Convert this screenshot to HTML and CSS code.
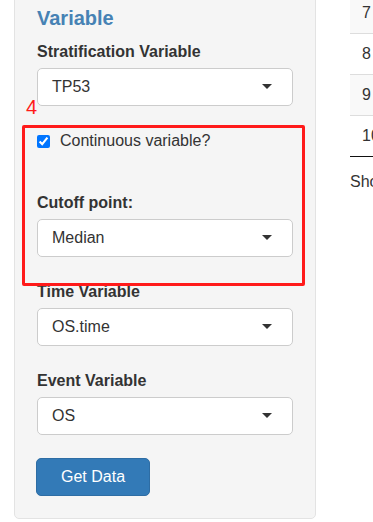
FILE: index.html
```html
<!DOCTYPE html>
<html lang="en">
<head>
    <meta charset="UTF-8">
    <meta name="viewport" content="width=device-width, initial-scale=1.0">
    <title>Survival analysis</title>
    <link rel="stylesheet" href="styles.css">
</head>
<body>
    <div class="page">
        <!-- sidebar panel -->
        <div class="well">
            <h3 class="panel-title">Variable</h3>

            <div class="form-group">
                <label class="control-label">Stratification Variable</label>
                <div class="select-box">
                    <span>TP53</span>
                    <span class="caret"></span>
                </div>
            </div>

            <!-- annotated block -->
            <div class="annot">
                <div class="form-group checkbox-group">
                    <label class="checkbox">
                        <input type="checkbox" checked>
                        <span>Continuous variable?</span>
                    </label>
                </div>

                <div class="form-group">
                    <label class="control-label">Cutoff point:</label>
                    <div class="select-box">
                        <span>Median</span>
                        <span class="caret"></span>
                    </div>
                </div>

                <div class="annot-box"></div>
                <div class="annot-num">4</div>
            </div>

            <div class="form-group">
                <label class="control-label">Time Variable</label>
                <div class="select-box">
                    <span>OS.time</span>
                    <span class="caret"></span>
                </div>
            </div>

            <div class="form-group last">
                <label class="control-label">Event Variable</label>
                <div class="select-box">
                    <span>OS</span>
                    <span class="caret"></span>
                </div>
            </div>

            <button class="btn-primary">Get Data</button>
        </div>

        <!-- data table -->
        <div class="main">
            <table class="data-table">
                <tr class="odd"><td>7</td></tr>
                <tr><td>8</td></tr>
                <tr class="odd"><td>9</td></tr>
                <tr><td>10</td></tr>
            </table>
            <div class="table-info">Showing 1 to 10 of 100 entries</div>
        </div>
    </div>
</body>
</html>
```

FILE: styles.css
```css
/* base */
html {
    overflow: hidden;
}

body {
    margin: 0;
    font-family: "Liberation Sans", Arial, sans-serif;
    font-size: 16px;
    line-height: 20px;
    color: #333;
    background-color: #fff;
}

.page {
    display: flex;
    align-items: flex-start;
    padding-left: 14px;
}

/* sidebar well */
.well {
    flex: 0 0 302px;
    box-sizing: border-box;
    margin-top: -16px;
    padding: 22px;
    background-color: #f5f5f5;
    border: 1px solid #e3e3e3;
    border-radius: 5px;
}

.panel-title {
    margin: 0 0 13px;
    font-size: 20px;
    line-height: 22px;
    font-weight: bold;
    color: #4682b4;
}

.form-group {
    margin-bottom: 25px;
}

.form-group.last {
    margin-bottom: 23px;
}

.control-label {
    display: block;
    margin-bottom: 6px;
    font-weight: bold;
}

/* fake selectize input */
.select-box {
    position: relative;
    box-sizing: border-box;
    height: 38px;
    padding: 8px 14px;
    background-color: #fff;
    border: 1px solid #ccc;
    border-radius: 5px;
}

.caret {
    position: absolute;
    right: 20px;
    top: 15px;
    width: 0;
    height: 0;
    border-left: 5.5px solid transparent;
    border-right: 5.5px solid transparent;
    border-top: 5px solid #333;
}

/* checkbox */
.checkbox-group {
    margin-bottom: 42px;
}

.checkbox {
    display: flex;
    align-items: center;
    font-weight: normal;
}

.checkbox input {
    width: 13px;
    height: 13px;
    margin: 0 10px 0 0;
}

/* red annotation */
.annot {
    position: relative;
}

.annot-box {
    position: absolute;
    top: -6px;
    left: -15px;
    right: -12px;
    bottom: -29px;
    border: 3px solid #ff1a1a;
    border-radius: 2px;
    pointer-events: none;
}

.annot-num {
    position: absolute;
    top: -34px;
    left: -11px;
    font-size: 20px;
    line-height: 20px;
    color: #ff1a1a;
}

/* button */
.btn-primary {
    display: block;
    height: 38px;
    margin-left: -1px;
    padding: 0 24px;
    font-family: inherit;
    font-size: 16px;
    color: #fff;
    background-color: #337ab7;
    border: 1px solid #2e6da4;
    border-radius: 5px;
    cursor: pointer;
}

/* table area */
.main {
    margin-left: 34px;
    margin-top: -7px;
}

.data-table {
    border-collapse: separate;
    border-spacing: 0;
    white-space: nowrap;
}

.data-table td {
    min-width: 40px;
    padding: 10px 12px;
    border-bottom: 1px solid #ddd;
}

.data-table tr.odd td {
    background-color: #f9f9f9;
}

.data-table tr:last-child td {
    border-bottom: 1px solid #111;
}

.table-info {
    margin-top: 15px;
    white-space: nowrap;
}
```
